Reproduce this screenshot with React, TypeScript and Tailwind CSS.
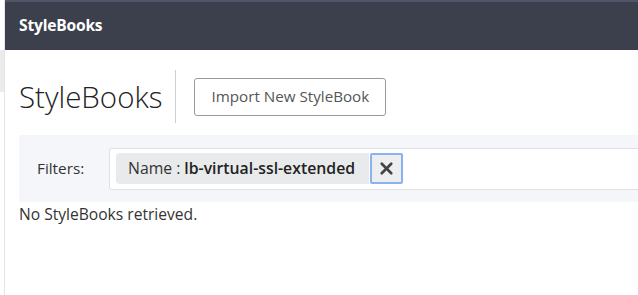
import { X } from "lucide-react";

export default function App() {
  return (
    <div
      className="flex h-[295px] w-[638px] overflow-hidden bg-white text-[#333]"
      style={{ fontFamily: '"Open Sans", "Noto Sans", sans-serif' }}
    >
      <div className="flex w-[5px] shrink-0 flex-col border-r border-[#e4e4e6]">
        <div className="h-[50px] bg-white" />
        <div className="h-[42px] bg-[#ebebed]" />
      </div>

      <div className="flex min-w-0 flex-1 flex-col">
        <header className="flex h-[50px] shrink-0 items-center border-t-2 border-[#50566a] bg-[#3b404c] px-[14px]">
          <h1 className="text-[15.6px] font-bold tracking-[-0.2px] text-white">StyleBooks</h1>
        </header>

        <div className="flex items-center pl-[14px] pt-[20px]">
          <h2 className="pr-[13px] text-[29.5px] font-light leading-[40px] text-[#222]">StyleBooks</h2>
          <div className="h-[53px] w-px bg-[#cfcfcf]" />
          <button className="ml-[18px] h-[38px] rounded-[3px] border border-[#9a9a9a] px-[16px] text-[15.2px] text-[#555]">
            Import New StyleBook
          </button>
        </div>

        <div className="ml-[14px] mt-[12px] flex h-[67px] items-center bg-[#f4f6f9] pl-[18px]">
          <span className="w-[72px] text-[15.3px] text-[#333]">Filters:</span>
          <div className="flex h-[42px] flex-1 items-center rounded-l-[3px] border border-r-0 border-[#dfe1e4] bg-white pl-[6px]">
            <div className="flex h-[31px] items-center rounded-l-[4px] bg-[#e9eaec] pl-[12px] pr-[14px] text-[15.8px]">
              <span className="text-[#333]">Name</span>
              <span className="mx-[4px] text-[#333]">:</span>
              <span className="font-semibold text-[#222]">lb-virtual-ssl-extended</span>
            </div>
            <button className="ml-px flex h-[31px] w-[33px] items-center justify-center rounded-[2px] border-2 border-[#8ab2f2] bg-[#eceef0]">
              <X size={19} strokeWidth={3.4} className="text-[#444]" />
            </button>
          </div>
        </div>

        <p className="ml-[14px] mt-px text-[15.6px] text-[#333]">No StyleBooks retrieved.</p>
      </div>
    </div>
  );
}
